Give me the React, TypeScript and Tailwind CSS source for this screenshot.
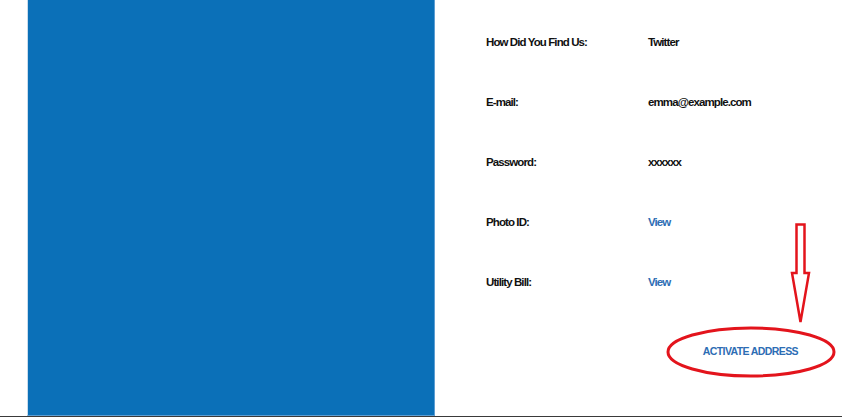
import React from 'react';

const rows: { label: string; value: string; link?: boolean }[] = [
  { label: 'How Did You Find Us:', value: 'Twitter' },
  { label: 'E-mail:', value: 'emma@example.com' },
  { label: 'Password:', value: 'xxxxxx' },
  { label: 'Photo ID:', value: 'View', link: true },
  { label: 'Utility Bill:', value: 'View', link: true },
];

export default function App() {
  return (
    <div
      className="relative w-[842px] h-[417px] bg-white overflow-hidden border-b border-[#3a3a3a] flex"
      style={{ fontFamily: '"Liberation Sans", Arial, sans-serif' }}
    >
      {/* left image placeholder */}
      <div className="ml-[27px] w-[408px] h-[416px] bg-[#0b70b8] border border-[#5d9ed3] border-l-[#c9dcec] border-t-0" />

      {/* details */}
      <div className="flex-1 flex flex-col pl-[51px] pt-[12px]">
        {rows.map((r) => (
          <div key={r.label} className="h-[60px] flex items-center text-[11.5px] leading-[14px] tracking-[-0.9px]">
            <span className="w-[162px] font-bold text-[#111]">{r.label}</span>
            {r.link ? (
              <a className="text-[#2d6db4] font-bold cursor-pointer">{r.value}</a>
            ) : (
              <span className="text-[#111] font-bold">{r.value}</span>
            )}
          </div>
        ))}

        <div className="flex justify-end pr-[44px] mt-[32px]">
          <button className="text-[10.5px] leading-[14px] tracking-[-0.6px] font-bold uppercase text-[#2d6db4]">
            Activate Address
          </button>
        </div>
      </div>

      {/* red annotation */}
      <svg className="absolute inset-0 pointer-events-none" width="842" height="417" viewBox="0 0 842 417">
        <polygon
          points="796.5,224.5 804.5,224.5 804.5,273 809,273 800.5,322 792,273 796.5,273"
          fill="none"
          stroke="#e3141c"
          strokeWidth="2.5"
          strokeLinejoin="miter"
        />
        <ellipse cx="751" cy="352" rx="83" ry="24" fill="none" stroke="#e3141c" strokeWidth="3" />
      </svg>
    </div>
  );
}
